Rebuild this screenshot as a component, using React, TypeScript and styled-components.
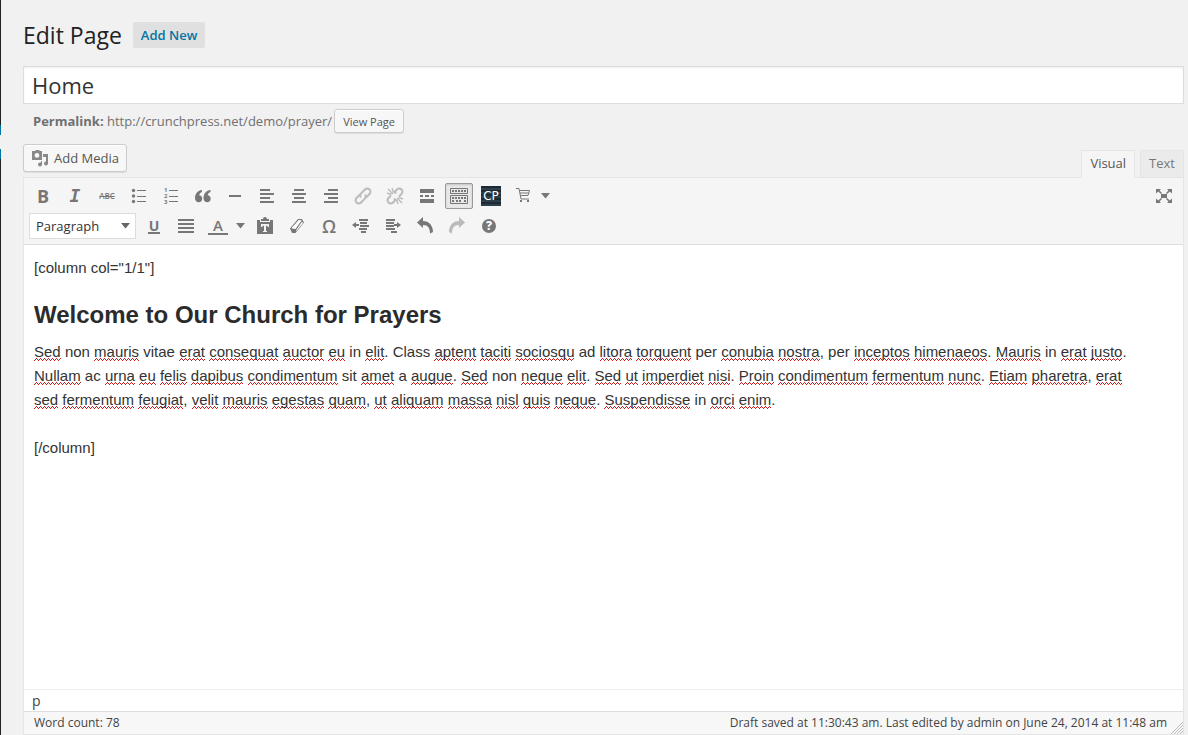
import React from "react";
import styled, { createGlobalStyle, css } from "styled-components";

const ui = `"Open Sans", sans-serif`;
const copy = `"Liberation Sans", Arial, sans-serif`;
const ink = "#777";

const squiggle = `url("data:image/svg+xml,%3Csvg xmlns='http://www.w3.org/2000/svg' width='4' height='3'%3E%3Cpath d='M0 2h1v1H0zM1 1h1v1H1zM2 0h1v1H2zM3 1h1v1H3z' fill='%23d01818'/%3E%3C/svg%3E")`;

const Global = createGlobalStyle`
  *, *::before, *::after { box-sizing: border-box; }
  body { margin: 0; background: #f1f1f1; color: #444; font: 13px/18px ${ui}; }
  button, input, select { font-family: inherit; margin: 0; }
`;

const Screen = styled.div`
  display: flex;
  min-height: 100vh;
`;

const MenuEdge = styled.div`
  width: 1px;
  flex: none;
  background: linear-gradient(
    #222 125px, #0074a2 125px, #0074a2 135px, #f1f1f1 135px,
    #f1f1f1 149px, #0074a2 149px, #0074a2 159px, #222 159px
  );
`;

const Main = styled.main`
  flex: 1;
  min-width: 0;
  display: flex;
  flex-direction: column;
  padding: 20px 4px 0 22px;
`;

const Heading = styled.header`
  display: flex;
  align-items: center;
  gap: 11px;
  height: 30px;
  margin-bottom: 16px;
`;

const PageTitle = styled.h1`
  margin: 0;
  font-size: 23px;
  line-height: 30px;
  font-weight: 400;
  color: #222;
`;

const AddNew = styled.a`
  padding: 4px 8px;
  border-radius: 2px;
  background: #e0e0e0;
  color: #0074a2;
  font-size: 13px;
  line-height: 18px;
  font-weight: 600;
  text-decoration: none;
`;

const TitleInput = styled.input`
  display: block;
  width: 100%;
  height: 38px;
  padding: 0 8px;
  border: 1px solid #ddd;
  background: #fff;
  box-shadow: inset 0 1px 2px rgba(0, 0, 0, 0.07);
  color: #333;
  font-size: 22px;
  outline: none;
`;

const Permalink = styled.div`
  display: flex;
  align-items: center;
  gap: 2px;
  padding: 5px 10px 0;
  color: #707070;
`;

const PlainButton = styled.button<{ $large?: boolean }>`
  display: inline-flex;
  align-items: center;
  gap: 5px;
  height: ${(p) => (p.$large ? 28 : 24)}px;
  padding: 0 ${(p) => (p.$large ? 7 : 8)}px;
  border: 1px solid #ccc;
  border-radius: 3px;
  background: #f7f7f7;
  box-shadow: inset 0 1px 0 #fff, 0 1px 0 rgba(0, 0, 0, 0.08);
  color: #555;
  font-size: ${(p) => (p.$large ? 13 : 11)}px;
  white-space: nowrap;

  svg { color: #888; }
`;

const MediaRow = styled.div`
  display: flex;
  align-items: flex-end;
  justify-content: space-between;
  height: 33px;
  margin-top: 11px;
`;

const MediaSlot = styled.div`
  align-self: flex-start;
`;

const Tabs = styled.div`
  display: flex;
  gap: 5px;
`;

const Tab = styled.button<{ $active?: boolean }>`
  position: relative;
  height: 28px;
  margin-bottom: -1px;
  padding: 0 8px 2px;
  border: 1px solid #e5e5e5;
  border-bottom-color: ${(p) => (p.$active ? "#f5f5f5" : "#e5e5e5")};
  background: ${(p) => (p.$active ? "#f5f5f5" : "#ebebeb")};
  color: ${(p) => (p.$active ? "#555" : "#777")};
  font-size: 13px;
`;

const Editor = styled.section`
  flex: 1;
  display: flex;
  flex-direction: column;
  border: 1px solid #e5e5e5;
  background: #fff;
`;

const Toolbar = styled.div`
  display: flex;
  flex-direction: column;
  gap: 4px;
  padding: 5px;
  border-bottom: 1px solid #dedede;
  background: #f5f5f5;
`;

const ToolRow = styled.div`
  display: flex;
  gap: 4px;
`;

const Spacer = styled.span`
  flex: 1;
`;

const Tool = styled.button<{ $active?: boolean; $faded?: boolean; $menu?: boolean }>`
  display: flex;
  align-items: center;
  justify-content: center;
  flex: none;
  width: ${(p) => (p.$menu ? 43 : 28)}px;
  height: 26px;
  padding: 0;
  border: 1px solid transparent;
  border-radius: 2px;
  background: none;
  color: ${ink};
  ${(p) => p.$faded && css`color: #bbb;`}
  ${(p) => p.$menu && css`
    justify-content: flex-start;
    gap: 8px;
    padding-left: 3px;
  `}
  ${(p) => p.$active && css`
    border-color: #999;
    background: #e8e8e8;
    box-shadow: inset 0 1px 2px rgba(0, 0, 0, 0.15);
  `}
`;

const Glyph = styled.span<{ $size?: number; $weight?: number }>`
  font-size: ${(p) => p.$size ?? 18}px;
  line-height: 20px;
  font-weight: ${(p) => p.$weight ?? 700};
`;

const Italic = styled(Glyph)`
  font-family: "DejaVu Sans Mono", monospace;
  font-style: italic;
`;

const Strike = styled(Glyph)`
  text-decoration: line-through;
`;

const Underlined = styled(Glyph)`
  border-bottom: 2px solid ${ink};
  line-height: 13px;
  padding: 0 1px;
`;

const ColourLetter = styled(Glyph)`
  width: 20px;
  border-bottom: 2px solid ${ink};
  line-height: 15px;
  text-align: center;
`;

const Logo = styled.span`
  width: 20px;
  height: 20px;
  background: repeating-linear-gradient(#1d2a33 0 2px, #2d3f4b 2px 4px);
  color: #fff;
  font-family: "DejaVu Sans", sans-serif;
  font-size: 12px;
  line-height: 20px;
  text-align: center;
`;

const Help = styled.span`
  width: 14px;
  height: 14px;
  border-radius: 50%;
  background: ${ink};
  color: #f5f5f5;
  font-size: 12px;
  line-height: 14px;
  font-weight: 800;
  text-align: center;
`;

const FormatBox = styled.div`
  display: grid;
  width: 107px;
  align-items: center;
`;

const Format = styled.select`
  grid-area: 1 / 1;
  appearance: none;
  width: 100%;
  height: 26px;
  padding: 0 20px 0 6px;
  border: 1px solid #ddd;
  border-radius: 0;
  background: #fff;
  color: #333;
  font-size: 13px;
`;

const FormatArrow = styled.span`
  grid-area: 1 / 1;
  justify-self: end;
  display: flex;
  padding-right: 6px;
  color: #666;
  pointer-events: none;
`;

const Content = styled.article`
  flex: 1;
  padding: 11px 10px;
  color: #333;
  font: 15px/24px ${copy};

  p { margin: 0 0 24px; white-space: pre-line; }
  h2 { margin: 0 0 14px; color: #2b2b2b; font-size: 24px; line-height: 22px; font-weight: 700; }
`;

const Misspelt = styled.span`
  padding-bottom: 1px;
  background: ${squiggle} left bottom repeat-x;
`;

const PathBar = styled.div`
  height: 22px;
  padding: 0 8px;
  border-top: 1px solid #eee;
  font-size: 14px;
  line-height: 21px;
`;

const StatusBar = styled.footer`
  display: flex;
  justify-content: space-between;
  height: 23px;
  padding: 0 0 0 10px;
  border-top: 1px solid #dedede;
  background: #f7f7f7;
  font-size: 12px;
  line-height: 22px;
`;

const SavedNote = styled.span`
  display: flex;
  align-items: flex-end;
  gap: 4px;
`;

const Icon = ({ children, size = 20 }: { children: React.ReactNode; size?: number }) => (
  <svg width={size} height={size} viewBox={`0 0 ${size} ${size}`} fill="currentColor" aria-hidden="true">
    {children}
  </svg>
);

const Caret = () => (
  <svg width="9" height="6" viewBox="0 0 9 6" fill="currentColor" aria-hidden="true">
    <path d="M0 0h9L4.500 5.500z" />
  </svg>
);

const Lines = ({ rows }: { rows: [number, number][] }) => (
  <Icon>
    {rows.map(([x, w], i) => (
      <rect key={i} x={x} y={3 + i * (12 / (rows.length - 1))} width={w} height="2" />
    ))}
  </Icon>
);

const icons = {
  bullets: (
    <Icon>
      <circle cx="4.500" cy="4.500" r="1.700" /><circle cx="4.500" cy="10" r="1.700" /><circle cx="4.500" cy="15.500" r="1.700" />
      <path d="M8 4h9v1H8zM8 10h9v1H8zM8 15h9v1H8z" />
    </Icon>
  ),
  numbers: (
    <Icon>
      <g fontSize="6" fontWeight="700" fontFamily="Open Sans, sans-serif">
        <text x="3" y="6">1</text><text x="3" y="12">2</text><text x="3" y="18">3</text>
      </g>
      <path d="M8 4h9v1H8zM8 10h9v1H8zM8 15h9v1H8z" />
    </Icon>
  ),
  quote: (
    <Icon>
      <path d="M9 4C5 4.500 2 7.500 2 12c0 2.500 1.400 4.200 3.700 4.200 2 0 3.500-1.500 3.500-3.500S7.900 9.300 6.200 9.300C6.400 7.600 7.400 6.500 9 6zM17.500 4c-4 .5-7 3.500-7 8 0 2.500 1.400 4.200 3.700 4.200 2 0 3.500-1.500 3.500-3.500s-1.300-3.400-3-3.400c.2-1.700 1.200-2.800 2.800-3.300z" />
    </Icon>
  ),
  rule: <Icon><path d="M4 9h12v2H4z" /></Icon>,
  link: (
    <Icon>
      <g fill="none" stroke="currentColor" strokeWidth="2" strokeLinecap="round" transform="rotate(-45 10 10)">
        <path d="M8.500 6.800H4a3.200 3.200 0 0 0 0 6.400h5.500a3.200 3.200 0 0 0 2.800-2" />
        <path d="M11.500 13.200H16a3.200 3.200 0 0 0 0-6.400h-5.500a3.200 3.200 0 0 0-2.800 2" />
      </g>
    </Icon>
  ),
  unlink: (
    <Icon>
      <g fill="none" stroke="currentColor" strokeWidth="2">
        <g transform="rotate(-45 10 10)">
          <path d="M7.500 6.800H4a3.200 3.200 0 0 0 0 6.400h3.500V11M12.500 13.200H16a3.200 3.200 0 0 0 0-6.400h-3.500V9" />
        </g>
        <path d="M3 3l5 5M7 2l1.500 4.500M2 7l4.500 1.500M17 17l-5-5M13 18l-1.500-4.500M18 13l-4.500-1.500" strokeWidth="1.400" />
      </g>
    </Icon>
  ),
  more: <Icon><path d="M3 3h14v4H3zM3 9h3v2H3zM8 9h4v2H8zM14 9h3v2h-3zM3 13h14v4H3z" /></Icon>,
  keyboard: (
    <Icon>
      <g fill="none" stroke="currentColor">
        <path d="M1.500 2.500h17v5h-17zM1.500 9.500h17v8h-17z" />
        <path d="M3 5h14M3 12h14M3 15h2M7 15h6M15 15h2" strokeWidth="2" strokeDasharray="2 1" />
      </g>
    </Icon>
  ),
  cart: (
    <Icon>
      <path d="M3 2.500h3l2 10.500h8M6.500 4.500h10l-1.500 5H7.500M7 7h8.500" fill="none" stroke="currentColor" />
      <path d="M7 14h2v2H7zM14 14h2v2h-2z" />
    </Icon>
  ),
  expand: (
    <Icon>
      <path d="M7 8h6v4H7zM2 3h5L5.500 4.500 8 7 7 8 4.200 5.500 2 7.500zM18 3h-5l1.500 1.500L12 7l1 1 2.800-2.500L18 7.500zM2 17h5l-1.500-1.500L8 13l-1-1-2.800 2.500L2 12.500zM18 17h-5l1.500-1.500L12 13l1-1 2.800 2.500 2.200-2z" />
    </Icon>
  ),
  paste: (
    <Icon>
      <path fillRule="evenodd" d="M2 4h3v2h10V4h3v14H2zM6 8v3h1.500V9.800h1.500V15H8v1h4v-1h-1V9.800h1.500V11H14V8z" />
      <path d="M6 3h2a2 2 0 0 1 4 0h2v2H6z" />
    </Icon>
  ),
  eraser: (
    <Icon>
      <path fillRule="evenodd" d="M11 3h4l2 3.500L8.500 17H5l-2-4.500zM11.700 4.200L4.500 12.200l4 .6 6-8.600z" />
      <path d="M11.700 4.200L4.500 12.200l4 .6 6-8.600z" fill="#fff" />
      <path d="M9.500 13.500l5.500-8 1 1.500-7 8.500z" fill="#fff" />
    </Icon>
  ),
  outdent: (
    <Icon>
      <path d="M8 3h9v2H8zM9 6h7v2H9zM9 9h9v2H9zM8 12h8v2H8zM10 15h5v2h-5zM1 9l4-3v2h3v2H5v2z" />
    </Icon>
  ),
  indent: (
    <Icon>
      <path d="M3 3h9v2H3zM3 6h8v2H3zM3 9h8v2H3zM3 12h9v2H3zM8 15h6v2H8zM18 9l-4-3v2h-3v2h3v2z" />
    </Icon>
  ),
  undo: <Icon><path d="M8 1v4c6 0 10 4.500 10 11l-3 1.500C15 12 13 9 8 9v3L2 6.500z" /></Icon>,
  redo: <Icon><path d="M12 1v4C6 5 2 9.500 2 16l3 1.500C5 12 7 9 12 9v3l6-5.500z" /></Icon>,
  media: (
    <Icon size={18}>
      <path fillRule="evenodd" d="M2 2h2l1-1h3l1 1h2v9H1V2zM6 4a2.400 2.400 0 1 0 0 4.800A2.400 2.400 0 0 0 6 4z" />
      <path d="M12 5h5v9.500a2 2 0 1 1-2-2V8h-3zM10 12h1v3.500a2 2 0 1 1-2-2h1z" />
    </Icon>
  ),
  grip: (
    <svg width="12" height="12" viewBox="0 0 12 12" stroke="#bbb" aria-hidden="true">
      <path d="M0 12L12 0M3 12l9-9M6 12l6-6M9 12l3-3" />
    </svg>
  ),
};

// Words the spelling checker accepts; every other word gets a squiggle.
const known = new Set(["non", "vitae", "in", "Class", "ad", "per", "ac", "sit", "a"]);

const passage = [
  "Sed non mauris vitae erat consequat auctor eu in elit. Class aptent taciti sociosqu ad litora torquent per conubia nostra, per inceptos himenaeos. Mauris in erat justo.",
  "Nullam ac urna eu felis dapibus condimentum sit amet a augue. Sed non neque elit. Sed ut imperdiet nisi. Proin condimentum fermentum nunc. Etiam pharetra, erat",
  "sed fermentum feugiat, velit mauris egestas quam, ut aliquam massa nisl quis neque. Suspendisse in orci enim.",
].join("\n");

const Spelled = ({ text }: { text: string }) => (
  <>
    {text.split(/(\w+)/).map((part, i) =>
      i % 2 && !known.has(part) ? <Misspelt key={i}>{part}</Misspelt> : part,
    )}
  </>
);

export default function App() {
  return (
    <Screen>
      <Global />
      <MenuEdge />
      <Main>
        <Heading>
          <PageTitle>Edit Page</PageTitle>
          <AddNew href="#new">Add New</AddNew>
        </Heading>
        <TitleInput aria-label="Title" defaultValue="Home" />
        <Permalink>
          <span><strong>Permalink:</strong> http://crunchpress.net/demo/prayer/</span>
          <PlainButton>View Page</PlainButton>
        </Permalink>
        <MediaRow>
          <MediaSlot>
            <PlainButton $large>{icons.media}Add Media</PlainButton>
          </MediaSlot>
          <Tabs>
            <Tab $active>Visual</Tab>
            <Tab>Text</Tab>
          </Tabs>
        </MediaRow>
        <Editor>
          <Toolbar>
            <ToolRow>
              <Tool aria-label="Bold"><Glyph>B</Glyph></Tool>
              <Tool aria-label="Italic"><Italic>I</Italic></Tool>
              <Tool aria-label="Strikethrough"><Strike $size={8} $weight={600}>ABC</Strike></Tool>
              <Tool aria-label="Bulleted list">{icons.bullets}</Tool>
              <Tool aria-label="Numbered list">{icons.numbers}</Tool>
              <Tool aria-label="Blockquote">{icons.quote}</Tool>
              <Tool aria-label="Horizontal line">{icons.rule}</Tool>
              <Tool aria-label="Align left"><Lines rows={[[3, 10], [3, 14], [3, 10], [3, 14]]} /></Tool>
              <Tool aria-label="Align center"><Lines rows={[[5, 10], [3, 14], [5, 10], [3, 14]]} /></Tool>
              <Tool aria-label="Align right"><Lines rows={[[7, 10], [3, 14], [7, 10], [3, 14]]} /></Tool>
              <Tool aria-label="Insert link" $faded>{icons.link}</Tool>
              <Tool aria-label="Remove link" $faded>{icons.unlink}</Tool>
              <Tool aria-label="Read more">{icons.more}</Tool>
              <Tool aria-label="Toolbar toggle" $active>{icons.keyboard}</Tool>
              <Tool aria-label="Shortcodes"><Logo>CP</Logo></Tool>
              <Tool aria-label="Shop" $menu>{icons.cart}<Caret /></Tool>
              <Spacer />
              <Tool aria-label="Fullscreen">{icons.expand}</Tool>
            </ToolRow>
            <ToolRow>
              <FormatBox>
                <Format aria-label="Format"><option>Paragraph</option></Format>
                <FormatArrow><Caret /></FormatArrow>
              </FormatBox>
              <Tool aria-label="Underline"><Underlined $size={14}>U</Underlined></Tool>
              <Tool aria-label="Justify"><Lines rows={[[2, 16], [2, 16], [2, 16], [2, 16]]} /></Tool>
              <Tool aria-label="Text color" $menu><ColourLetter $size={15} $weight={600}>A</ColourLetter><Caret /></Tool>
              <Tool aria-label="Paste as text">{icons.paste}</Tool>
              <Tool aria-label="Clear formatting">{icons.eraser}</Tool>
              <Tool aria-label="Special character"><Glyph $weight={600}>Ω</Glyph></Tool>
              <Tool aria-label="Decrease indent">{icons.outdent}</Tool>
              <Tool aria-label="Increase indent">{icons.indent}</Tool>
              <Tool aria-label="Undo">{icons.undo}</Tool>
              <Tool aria-label="Redo" $faded>{icons.redo}</Tool>
              <Tool aria-label="Help"><Help>?</Help></Tool>
            </ToolRow>
          </Toolbar>
          <Content>
            <p>[column col="1/1"]</p>
            <h2>Welcome to Our Church for Prayers</h2>
            <p><Spelled text={passage} /></p>
            <p>[/column]</p>
          </Content>
          <PathBar>p</PathBar>
          <StatusBar>
            <span>Word count: 78</span>
            <SavedNote>
              Draft saved at 11:30:43 am. Last edited by admin on June 24, 2014 at 11:48 am
              {icons.grip}
            </SavedNote>
          </StatusBar>
        </Editor>
      </Main>
    </Screen>
  );
}
